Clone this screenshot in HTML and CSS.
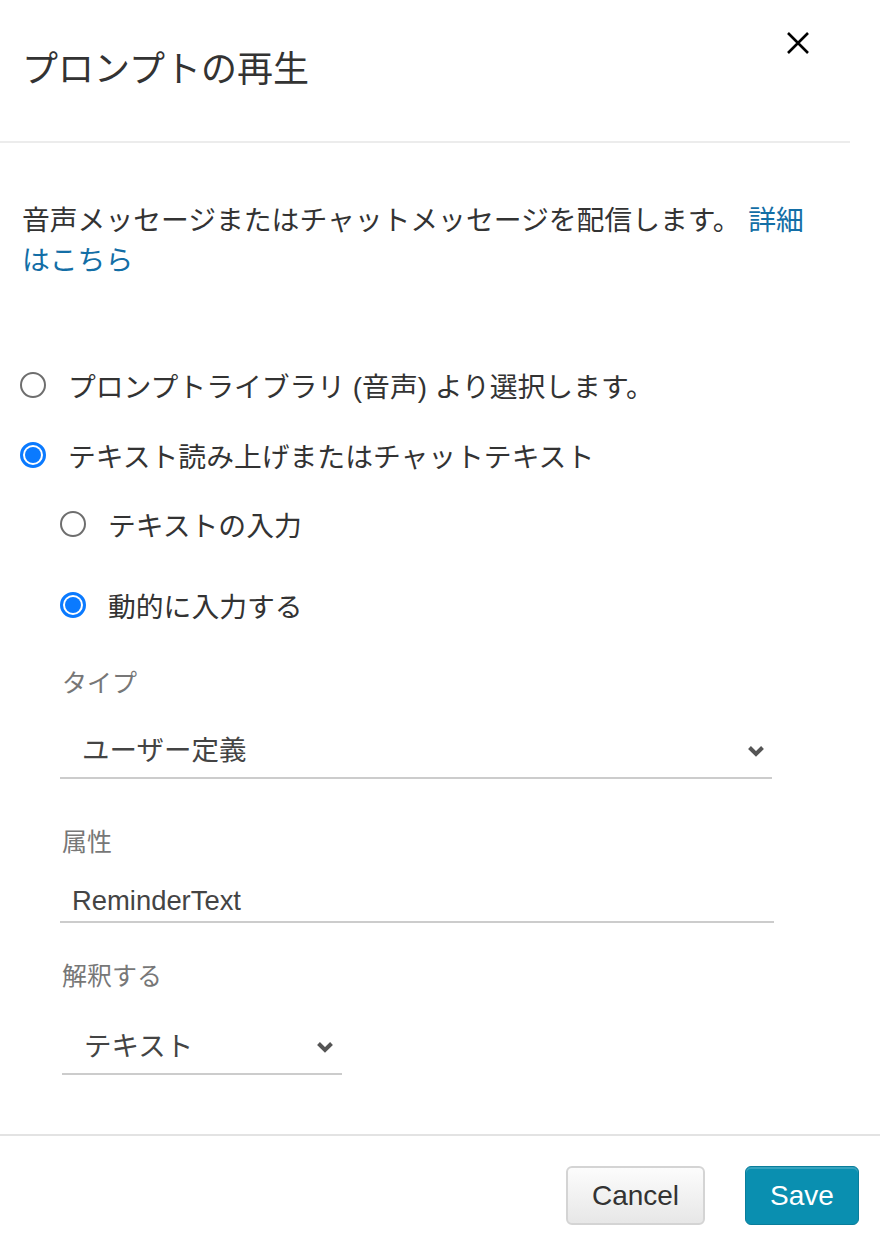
FILE: index.html
```html
<!DOCTYPE html>
<html lang="ja">
<head>
    <meta charset="UTF-8">
    <meta name="viewport" content="width=device-width, initial-scale=1.0">
    <title>プロンプトの再生</title>
    <link rel="stylesheet" href="styles.css">
</head>
<body>
    <div class="dialog">
        <header class="dialog-header">
            <h1 class="dialog-title">プロンプトの再生</h1>
            <button type="button" class="close-btn" aria-label="閉じる">
                <svg width="24" height="24" viewBox="0 0 24 24">
                    <path d="M2 2 L22 22 M22 2 L2 22" stroke="#000" stroke-width="2.6" fill="none"/>
                </svg>
            </button>
        </header>

        <div class="dialog-body">
            <p class="intro">音声メッセージまたはチャットメッセージを配信します。 <a href="#">詳細はこちら</a></p>

            <div class="options">
                <label class="option"><span class="radio"></span>プロンプトライブラリ (音声) より選択します。</label>
                <label class="option"><span class="radio checked"></span>テキスト読み上げまたはチャットテキスト</label>

                <div class="sub-options">
                    <label class="option"><span class="radio"></span>テキストの入力</label>
                    <label class="option"><span class="radio checked"></span>動的に入力する</label>

                    <div class="field">
                        <div class="field-label">タイプ</div>
                        <div class="select select-wide">
                            <span>ユーザー定義</span>
                            <svg class="chevron" width="18" height="12" viewBox="0 0 18 12">
                                <path d="M2.5 2.5 L9 9 L15.5 2.5" stroke="#555" stroke-width="4" fill="none"/>
                            </svg>
                        </div>
                    </div>

                    <div class="field field-attr">
                        <div class="field-label">属性</div>
                        <input type="text" class="text-input" value="ReminderText">
                    </div>

                    <div class="field field-interp">
                        <div class="field-label">解釈する</div>
                        <div class="select select-narrow">
                            <span>テキスト</span>
                            <svg class="chevron" width="18" height="12" viewBox="0 0 18 12">
                                <path d="M2.5 2.5 L9 9 L15.5 2.5" stroke="#555" stroke-width="4" fill="none"/>
                            </svg>
                        </div>
                    </div>
                </div>
            </div>
        </div>

        <footer class="dialog-footer">
            <button type="button" class="btn btn-cancel">Cancel</button>
            <button type="button" class="btn btn-save">Save</button>
        </footer>
    </div>
</body>
</html>
```

FILE: styles.css
```css
body {
    margin: 0;
    font-family: "Liberation Sans", "Noto Sans CJK JP", sans-serif;
    color: #333;
    background: #fff;
}
.dialog {
    width: 880px;
}

/* header */
.dialog-header {
    display: flex;
    justify-content: space-between;
    align-items: flex-start;
    width: 850px;
    height: 143px;
    box-sizing: border-box;
    padding: 31px 40px 0 22px;
    border-bottom: 2px solid #ececec;
}
.dialog-title {
    margin: 21px 0 0;
    font-size: 36px;
    line-height: 36px;
    font-weight: normal;
    color: #333;
}
.close-btn {
    width: 24px;
    height: 24px;
    padding: 0;
    border: 0;
    background: none;
    cursor: pointer;
}
.close-btn svg {
    display: block;
}

/* body */
.dialog-body {
    padding: 58px 0 0 20px;
}
.intro {
    margin: 0 0 0 2px;
    width: 800px;
    font-size: 27.8px;
    line-height: 40px;
    color: #333;
}
.intro a {
    color: #136ea6;
    text-decoration: none;
}
.options {
    margin-top: 84px;
}
.option {
    display: flex;
    align-items: center;
    gap: 22px;
    height: 40px;
    font-size: 27.8px;
    color: #333;
}
.option + .option {
    margin-top: 30px;
}
.sub-options {
    margin-left: 40px;
    margin-top: 29px;
}
.sub-options .option + .option {
    margin-top: 41px;
}
.radio {
    position: relative;
    flex-shrink: 0;
    width: 26px;
    height: 26px;
    box-sizing: border-box;
    border: 2px solid #6e6e6e;
    border-radius: 50%;
}
.radio.checked {
    border: 3px solid #0a7aff;
}
.radio.checked::after {
    content: "";
    position: absolute;
    inset: 2px;
    border-radius: 50%;
    background: #0a7aff;
}

/* fields */
.field {
    margin-top: 41px;
}
.field-attr {
    margin-top: 46px;
}
.field-interp {
    margin-top: 36px;
}
.field-label {
    padding-left: 2px;
    font-size: 25px;
    line-height: 34px;
    color: #777;
}
.select {
    display: flex;
    justify-content: space-between;
    align-items: center;
    margin-top: 31px;
    padding: 0 7px 6px 22px;
    border-bottom: 2px solid #ccc;
    font-size: 27.5px;
    line-height: 40px;
    color: #444;
}
.select-wide {
    width: 712px;
    box-sizing: border-box;
}
.select-narrow {
    width: 280px;
    box-sizing: border-box;
    margin-top: 34px;
    margin-left: 2px;
    padding-right: 8px;
}
.chevron {
    display: block;
}
.text-input {
    display: block;
    width: 714px;
    height: 42px;
    box-sizing: border-box;
    margin-top: 22px;
    padding: 0 0 0 12px;
    border: 0;
    border-bottom: 2px solid #ccc;
    font-family: inherit;
    font-size: 27.4px;
    color: #444;
    outline: none;
}

/* footer */
.dialog-footer {
    display: flex;
    justify-content: flex-end;
    gap: 40px;
    margin-top: 59px;
    padding: 30px 21px 0 0;
    border-top: 2px solid #e3e3e3;
}
.btn {
    height: 59px;
    box-sizing: border-box;
    border-radius: 6px;
    font-family: inherit;
    font-size: 28px;
    cursor: pointer;
}
.btn-cancel {
    width: 139px;
    border: 2px solid #d4d4d4;
    background: linear-gradient(#fcfcfc, #e7e7e7);
    color: #333;
}
.btn-save {
    width: 114px;
    border: 1px solid #0a7d9b;
    background: #0a8fb0;
    box-shadow: inset 0 2px 0 rgba(255, 255, 255, 0.18);
    color: #fff;
}
```
